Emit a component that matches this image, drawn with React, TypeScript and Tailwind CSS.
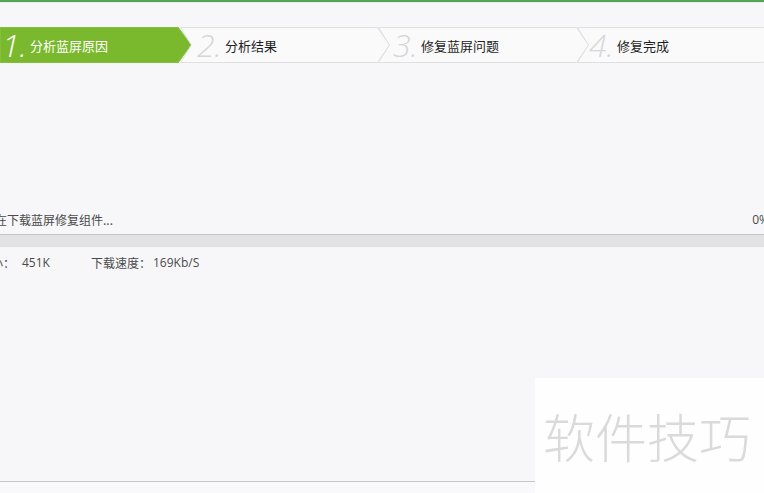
import React from "react";

const cjk = { fontFamily: '"Noto Sans CJK SC", "Noto Sans", sans-serif' };
const digitFont = { fontFamily: '"Open Sans", "Liberation Sans", sans-serif' };

type StepProps = {
  num: number;
  label: string;
  width: number;
  overlap: number;
  digitPad: number;
  textGap: number;
  active?: boolean;
  first?: boolean;
};

function Step({ num, label, width, overlap, digitPad, textGap, active, first }: StepProps) {
  const h = 36;
  const tip = 12;
  const path = first
    ? `M0,0 L${width - tip - 1},0 L${width},${h / 2} L${width - tip - 1},${h} L0,${h} Z`
    : `M0.5,0.5 L${width - tip - 0.5},0.5 L${width - 0.5},${h / 2} L${width - tip - 0.5},${h - 0.5} L0.5,${h - 0.5} L${tip - 0.5},${h / 2} Z`;
  return (
    <div
      className="relative h-[36px] shrink-0"
      style={{ width, marginLeft: overlap ? -overlap : 0 }}
    >
      <svg className="absolute inset-0" width={width} height={h} viewBox={`0 0 ${width} ${h}`}>
        <path
          d={path}
          fill={active ? "#7ab92d" : "#fafafb"}
          stroke={active ? "#8cc54a" : "#e0e0e2"}
          strokeWidth="1"
        />
      </svg>
      <div className="relative flex h-full items-center" style={{ paddingLeft: digitPad }}>
        <span
          className={`text-[32px] font-light italic leading-none ${active ? "text-white" : "text-[#d6d6d8]"}`}
          style={digitFont}
        >
          {num}.
        </span>
        <span
          className={`text-[13px] leading-none ${active ? "text-white" : "text-[#1e1e1e]"}`}
          style={{ ...cjk, marginLeft: textGap }}
        >
          {label}
        </span>
      </div>
    </div>
  );
}

export default function App() {
  return (
    <div
      className="relative flex h-[493px] w-[764px] flex-col overflow-hidden bg-[#f7f7f9]"
      style={cjk}
    >
      <div className="h-[2px] bg-[#55a159]" />
      <div className="h-[1px] bg-[#e6eee6]" />

      {/* step bar */}
      <div className="mt-[24px] flex h-[36px]">
        <Step num={1} label="分析蓝屏原因" width={191} overlap={0} digitPad={2} textGap={3} active first />
        <Step num={2} label="分析结果" width={210} overlap={11} digitPad={17} textGap={3} />
        <Step num={3} label="修复蓝屏问题" width={211} overlap={12} digitPad={15} textGap={3} />
        <Step num={4} label="修复完成" width={199} overlap={12} digitPad={12} textGap={3} />
      </div>

      {/* status */}
      <div className="mt-[149px] flex h-[16px] items-center justify-between text-[12px] leading-none text-[#4a4a4a]">
        <span className="ml-[-5px]">在下载蓝屏修复组件...</span>
        <span className="mr-[-5px]" style={digitFont}>0%</span>
      </div>

      {/* progress track */}
      <div className="mt-[6px] h-[1px] bg-[#c4c4c6]" />
      <div className="h-[12px] bg-[#e2e2e4]" />

      {/* download info */}
      <div className="mt-[8px] flex h-[16px] items-center text-[12px] leading-none text-[#4a4a4a]">
        <span className="ml-[-9px] w-[31px]">小：</span>
        <span style={digitFont}>451K</span>
        <span className="ml-[41px]">下载速度：</span>
        <span className="ml-[2px]" style={digitFont}>169Kb/S</span>
      </div>

      <div className="flex-1" />
      <div className="h-[1px] bg-[#c6c6c8]" />
      <div className="h-[11px] bg-[#f9f9fb]" />

      {/* watermark */}
      <div className="absolute left-[535px] top-[378px] h-[115px] w-[229px] bg-[#fefefe] pl-[8px] pt-[32px]">
        <span className="block text-[52px] font-light leading-[52px] text-[#dadadc]" style={cjk}>
          软件技巧
        </span>
      </div>
    </div>
  );
}
